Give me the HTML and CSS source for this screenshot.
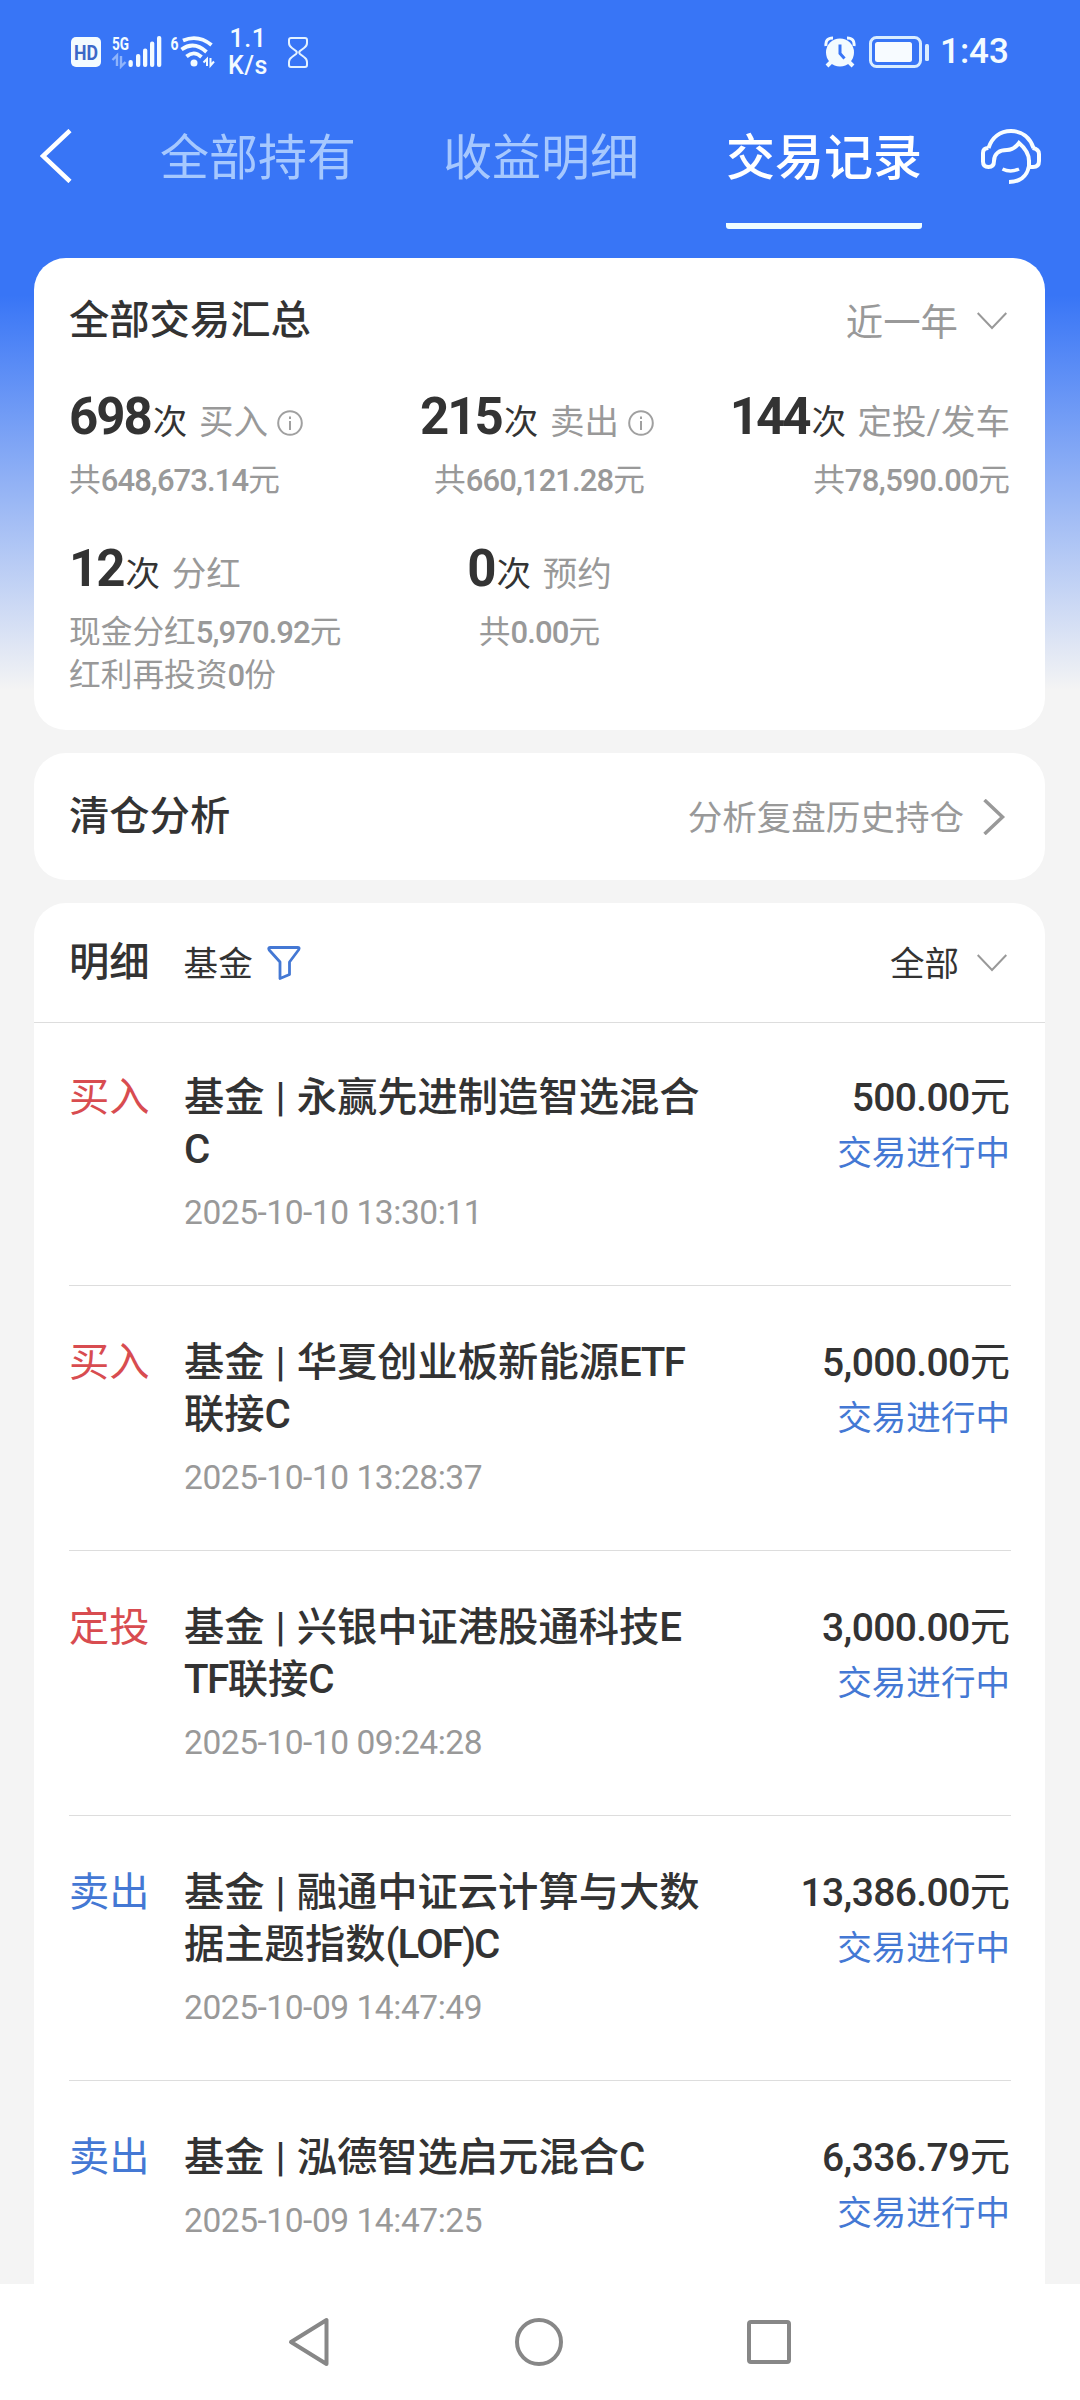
FILE: index.html
```html
<!DOCTYPE html>
<html lang="zh-CN">
<head>
<meta charset="utf-8">
<title>交易记录</title>
<link rel="stylesheet" href="styles.css">
</head>
<body>
<div class="screen">
  <div class="status">
    <svg class="status-icons" width="145" height="36" viewBox="0 0 145 36">
      <rect x="0" y="4" width="30" height="30" rx="5" fill="#f3fbff"/>
      <text class="hd" x="15" y="26.500" text-anchor="middle" textLength="24" lengthAdjust="spacingAndGlyphs">HD</text>
      <text class="net" x="41" y="17" textLength="17" lengthAdjust="spacingAndGlyphs">5G</text>
      <path d="M46 33V22.500L41.500 27M50 23v10.500l4.500-4.500" fill="none" stroke="#8fb4fb" stroke-width="2.400"/>
      <g fill="#f3fbff">
        <rect x="57.500" y="27" width="4.300" height="7" rx="2"/>
        <rect x="65" y="21" width="4.300" height="13" rx="2"/>
        <rect x="72" y="15.500" width="4.300" height="18.500" rx="2"/>
        <rect x="79" y="8.500" width="4.300" height="25.500" rx="2"/>
        <rect x="86" y="3" width="4.300" height="31" rx="2"/>
        <circle cx="123" cy="30" r="3.500"/>
      </g>
      <text class="net" x="99.500" y="17" textLength="8" lengthAdjust="spacingAndGlyphs">6</text>
      <g fill="none" stroke="#f3fbff" stroke-width="3.800">
        <path d="M112 7.500Q127 1 140.500 12"/>
        <path d="M110.500 16.500Q123 7.500 135.500 19"/>
        <path d="M115.500 23.500Q123 17 130.500 24"/>
        <path d="M136 33V26l-3.500 3.500M139.500 25v7.500l3.500-4" stroke-width="2"/>
      </g>
    </svg>
    <div class="speed"><span>1.1</span><span>K/s</span></div>
    <svg class="hourglass" width="20" height="31" viewBox="0 0 20 31" fill="none" stroke="#e4f2ff" stroke-width="2">
      <path d="M3 1h14q2 0 2 2v3q0 3-3 5l-4 3q-1.500 1.500 0 3l4 3q3 2 3 5v3q0 2-2 2H3q-2 0-2-2v-3q0-3 3-5l4-3q1.500-1.500 0-3l-4-3Q1 9 1 6V3q0-2 2-2z"/>
    </svg>
    <div class="status-right">
      <svg width="32" height="32" viewBox="0 0 32 32">
        <path d="M2 10Q1 2 9 2M30 10Q31 2 23 2" fill="none" stroke="#f3fbff" stroke-width="3"/>
        <path d="M7 26l-4 4M25 26l4 4" stroke="#f3fbff" stroke-width="4"/>
        <circle cx="16" cy="16.500" r="14" fill="#f3fbff"/>
        <path d="M16 8.500v9l4.500 5" fill="none" stroke="#3875f6" stroke-width="3"/>
      </svg>
      <svg class="battery" width="61" height="32" viewBox="0 0 61 32">
        <rect x="1.500" y="1.500" width="50" height="29" rx="6" fill="none" stroke="#d9edff" stroke-width="3"/>
        <rect x="6" y="6" width="37" height="20" rx="2.500" fill="#f7fbff"/>
        <rect x="56" y="8" width="4" height="17" rx="1.500" fill="#d9edff"/>
      </svg>
      <span class="clock">1:43</span>
    </div>
  </div>

  <div class="tabs">
    <svg class="back" width="32" height="54" viewBox="0 0 32 54" fill="none" stroke="#fff" stroke-width="4.500"><path d="M30 1.500 3 27l27 25.500"/></svg>
    <div class="tab-list">
      <span class="tab">全部持有</span>
      <span class="tab">收益明细</span>
      <span class="tab tab-active">交易记录</span>
    </div>
    <svg class="service" width="60" height="58" viewBox="0 0 60 58" fill="none" stroke="#f8fdff" stroke-width="4">
      <path d="M7.500 20C11 9.500 19 3 30 3s19 6.500 22.500 17"/>
      <path d="M7.500 20Q2 20 2 25v8.500Q2 39 7.500 39t5.500-6c0-8 6-11 13-11 6 0 9-3 12-7 6 5 10 11 10 18"/>
      <path d="M51.500 20q6.500 1 6.500 6v7q0 6-6 6h-4"/>
      <path d="M48 32v6C46 49 38 54 28 54"/>
      <path d="M21.500 41q8 4 16.500 0" stroke-width="3.500"/>
    </svg>
  </div>

  <main class="cards">
    <section class="card summary">
      <div class="card-head">
        <h2>全部交易汇总</h2>
        <span class="range"><span class="raise">近一年</span><svg width="30" height="18" viewBox="0 0 30 18" fill="none" stroke="#999" stroke-width="2"><path d="M.700 1 15 16 29.300 1"/></svg></span>
      </div>
      <div class="stats">
        <div class="stat">
          <div class="count"><b>698</b>次 <i>买入</i><svg class="info" width="26" height="26" viewBox="0 0 26 26" fill="none" stroke="#a0a0a0" stroke-width="2"><circle cx="13" cy="13" r="11.800"/><path d="M13 11v9M13 6.500v2.500"/></svg></div>
          <div class="sum">共<span class="num">648,673.14</span>元</div>
        </div>
        <div class="stat stat-mid">
          <div class="count"><b>215</b>次 <i>卖出</i><svg class="info" width="26" height="26" viewBox="0 0 26 26" fill="none" stroke="#a0a0a0" stroke-width="2"><circle cx="13" cy="13" r="11.800"/><path d="M13 11v9M13 6.500v2.500"/></svg></div>
          <div class="sum">共<span class="num">660,121.28</span>元</div>
        </div>
        <div class="stat stat-end">
          <div class="count"><b>144</b>次 <i>定投/发车</i></div>
          <div class="sum">共<span class="num">78,590.00</span>元</div>
        </div>
        <div class="stat">
          <div class="count"><b>12</b>次 <i>分红</i></div>
          <div class="sum">现金分红<span class="num">5,970.92</span>元<br>红利再投资<span class="num">0</span>份</div>
        </div>
        <div class="stat stat-mid">
          <div class="count"><b>0</b>次 <i>预约</i></div>
          <div class="sum">共<span class="num">0.00</span>元</div>
        </div>
      </div>
    </section>

    <section class="card review">
      <h2>清仓分析</h2>
      <span class="review-link"><span class="raise">分析复盘历史持仓</span><svg width="24" height="36" viewBox="0 0 24 36" fill="none" stroke="#999" stroke-width="3.500"><path d="M2.500 1 20.500 18l-18 17"/></svg></span>
    </section>

    <section class="card detail">
      <div class="detail-head">
        <h2>明细</h2>
        <span class="kind raise">基金</span>
        <svg class="funnel" width="34" height="34" viewBox="0 0 34 34" fill="none" stroke="#4478d4" stroke-width="2.800" stroke-linejoin="round"><path d="M3 1.500h28q2 0 .500 2.500L22.500 16v12.500L13 32.500V16L2.200 4Q1 1.500 3 1.500z"/></svg>
        <span class="filter"><span class="raise">全部</span><svg width="30" height="18" viewBox="0 0 30 18" fill="none" stroke="#999" stroke-width="2"><path d="M.700 1 15 16 29.300 1"/></svg></span>
      </div>
      <ul class="rows">
        <li class="row">
          <span class="type buy">买入</span>
          <div class="fund"><p class="name">基金 | 永赢先进制造智选混合<br>C</p><p class="time">2025-10-10 13:30:11</p></div>
          <div class="amount"><p class="money"><span class="num">500.00</span>元</p><p class="state">交易进行中</p></div>
        </li>
        <li class="row">
          <span class="type buy">买入</span>
          <div class="fund"><p class="name">基金 | 华夏创业板新能源<span class="lat">ETF</span><br>联接C</p><p class="time">2025-10-10 13:28:37</p></div>
          <div class="amount"><p class="money"><span class="num">5,000.00</span>元</p><p class="state">交易进行中</p></div>
        </li>
        <li class="row">
          <span class="type buy">定投</span>
          <div class="fund"><p class="name">基金 | 兴银中证港股通科技E<br><span class="lat">TF</span>联接C</p><p class="time">2025-10-10 09:24:28</p></div>
          <div class="amount"><p class="money"><span class="num">3,000.00</span>元</p><p class="state">交易进行中</p></div>
        </li>
        <li class="row">
          <span class="type sell">卖出</span>
          <div class="fund"><p class="name">基金 | 融通中证云计算与大数<br>据主题指数<span class="lat lof">(LOF)</span>C</p><p class="time">2025-10-09 14:47:49</p></div>
          <div class="amount"><p class="money"><span class="num">13,386.00</span>元</p><p class="state">交易进行中</p></div>
        </li>
        <li class="row">
          <span class="type sell">卖出</span>
          <div class="fund"><p class="name">基金 | 泓德智选启元混合C</p><p class="time">2025-10-09 14:47:25</p></div>
          <div class="amount"><p class="money"><span class="num">6,336.79</span>元</p><p class="state">交易进行中</p></div>
        </li>
      </ul>
    </section>
  </main>

  <nav class="navbar">
    <svg width="42" height="50" viewBox="0 0 42 50" fill="none" stroke="#878787" stroke-width="4" stroke-linejoin="round"><path d="M38.500 3v44L3 25z"/></svg>
    <svg width="50" height="50" viewBox="0 0 50 50" fill="none" stroke="#878787" stroke-width="4"><circle cx="25" cy="25" r="22"/></svg>
    <svg width="44" height="44" viewBox="0 0 44 44" fill="none" stroke="#878787" stroke-width="4"><rect x="2" y="2" width="40" height="40" rx="2"/></svg>
  </nav>
</div>
</body>
</html>
```
FILE: styles.css
```css
* { box-sizing: border-box; margin: 0; padding: 0; }

body {
  font-family: Roboto, "Noto Sans CJK SC", sans-serif;
  color: #333;
  background: #f4f4f4;
}

svg { display: block; flex: none; }
h2 { font-size: 40.300px; font-weight: 500; line-height: 52px; }
i { font-style: normal; }
.raise { padding-bottom: 3px; }

.screen {
  width: 1080px;
  height: 2400px;
  overflow: hidden;
  display: flex;
  flex-direction: column;
  background: linear-gradient(#3875f6 0, #3875f6 295px, #f4f4f4 690px);
}

/* Status bar */
.status {
  height: 104px;
  flex: none;
  display: flex;
  align-items: center;
  padding: 0 71px 0 71px;
  color: #f3fbff;
}
.status-icons { margin-bottom: 2px; }
.hd { font-size: 20px; font-weight: 700; fill: #3c68c8; }
.net { font-size: 19px; font-weight: 700; fill: #f3fbff; }
.speed {
  width: 42px;
  margin-left: 11px;
  display: flex;
  flex-direction: column;
  align-items: center;
  font-size: 25px;
  font-weight: 500;
  line-height: 27px;
  letter-spacing: .500px;
}
.hourglass { margin-left: 19px; }
.status-right { margin-left: auto; display: flex; align-items: center; }
.battery { margin-left: 13px; }
.clock { margin-left: 10px; width: 69px; font-size: 35px; font-weight: 500; line-height: 40px; white-space: nowrap; }

/* Page tabs */
.tabs {
  height: 154px;
  flex: none;
  display: flex;
  align-items: flex-start;
  padding: 25px 39px 0 40px;
}
.tab-list { margin-left: 88px; display: flex; gap: 87px; }
.tab {
  width: 196px;
  height: 100px;
  padding-top: 2px;
  font-size: 49px;
  line-height: 56px;
  color: #a6c8fe;
  white-space: nowrap;
}
.tab-active { color: #fff; font-weight: 500; border-bottom: 6px solid #f0fdff; border-radius: 3px; }
.service { margin: -1px 0 0 59px; }

/* Cards */
.cards { flex: 1; min-height: 0; padding: 0 35px 0 34px; display: flex; flex-direction: column; gap: 23px; overflow: hidden; }
.card { flex: none; background: #fff; border-radius: 32px; padding: 0 35px; }

.summary { height: 472px; padding-top: 37px; }
.card-head { display: flex; justify-content: space-between; align-items: center; height: 52px; }
.range { display: flex; align-items: center; gap: 19px; font-size: 37.400px; color: #999; padding-right: 3px; }

.stats { display: grid; grid-template-columns: repeat(3, 1fr); grid-auto-rows: 152px; margin-top: 34px; }
.stat { white-space: nowrap; }
.stat-mid { text-align: center; }
.stat-end { text-align: right; }
.count { font-size: 34.560px; line-height: 72px; height: 72px; }
.count b { font-size: 51px; font-weight: 700; letter-spacing: -2px; margin-right: 2px; }
.count i { color: #999; margin-left: 3px; }
.stat-mid .info { margin-right: 5px; }
.info { display: inline-block; margin-left: 9px; vertical-align: -2px; }
.sum { font-size: 31.700px; line-height: 43px; color: #999; margin-top: 6px; }
.sum .num { font-size: 31px; font-weight: 500; letter-spacing: -.900px; }
.stat-end b { letter-spacing: -3px; margin-right: 3px; }
.stat-end .num { letter-spacing: -.600px; }

.review { height: 127px; display: flex; justify-content: space-between; align-items: center; }
.review-link { display: flex; align-items: center; gap: 18px; font-size: 34.560px; color: #999; padding-right: 4px; }

.detail { height: 1500px; padding: 0; }
.detail-head { height: 120px; display: flex; align-items: center; padding: 0 38px 0 35px; border-bottom: 1px solid #ddd; }
.kind { font-size: 34.560px; margin-left: 34px; }
.funnel { margin-left: 14px; }
.filter { margin-left: auto; display: flex; align-items: center; gap: 18px; font-size: 34.560px; }

.rows { list-style: none; padding: 0 34px 0 35px; }
.row { height: 265px; padding-top: 51px; display: flex; border-bottom: 1px solid #ddd; }
.row:first-child { height: 263px; padding-top: 49px; }
.type { width: 115px; font-size: 40.300px; line-height: 52px; }
.buy { color: #d84c50; }
.sell { color: #4478d4; }
.name { font-size: 40.300px; font-weight: 500; line-height: 52px; word-spacing: 1px; white-space: nowrap; }
.lat { letter-spacing: -1.500px; }
.lof { letter-spacing: -2px; }
.time { font-size: 33.500px; line-height: 40px; margin-top: 17px; color: #999; letter-spacing: -.450px; white-space: nowrap; }
.amount { margin-left: auto; padding-right: 1px; text-align: right; white-space: nowrap; }
.money { font-size: 40.300px; line-height: 52px; }
.money .num { font-size: 39px; font-weight: 500; letter-spacing: -.600px; }
.state { font-size: 34.560px; line-height: 48px; margin-top: 5px; color: #4478d4; }

/* System navigation */
.navbar {
  height: 116px;
  flex: none;
  display: flex;
  align-items: center;
  justify-content: space-between;
  padding: 0 289px 0 288px;
  background: #fff;
}
```
